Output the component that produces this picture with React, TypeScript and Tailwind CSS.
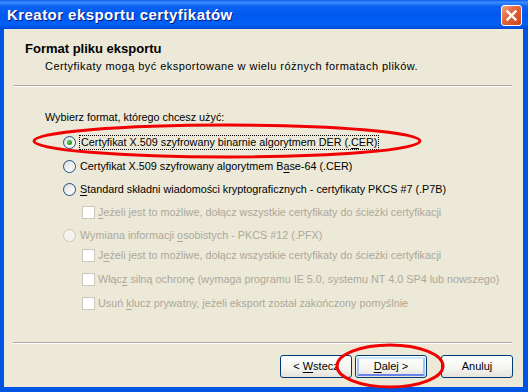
import type { ReactNode } from "react";

const FONT = "font-['Tahoma','Liberation_Sans',sans-serif]";

function Radio({ checked = false, disabled = false }: { checked?: boolean; disabled?: boolean }) {
  return (
    <span
      className={
        disabled
          ? "flex h-[13px] w-[13px] shrink-0 items-center justify-center rounded-full border border-[#CAC8BB] bg-[#F4F3EE]"
          : "flex h-[13px] w-[13px] shrink-0 items-center justify-center rounded-full border border-[#1C5180] bg-[linear-gradient(135deg,#DCDCD7_0%,#F5F5F2_60%,#FFFFFF_100%)]"
      }
    >
      {checked && (
        <span className="h-[5px] w-[5px] rounded-full bg-[radial-gradient(circle_at_35%_35%,#55D451_0%,#21A121_60%,#1A8A1A_100%)]" />
      )}
    </span>
  );
}

function Check() {
  return <span className="h-[13px] w-[13px] shrink-0 border border-[#CAC8BB] bg-white" />;
}

function Row({ children, mt, indent }: { children: ReactNode; mt: string; indent: string }) {
  return <div className={`flex h-[16px] items-center ${mt} ${indent}`}>{children}</div>;
}

function XpButton({ children, focused = false }: { children: ReactNode; focused?: boolean }) {
  return (
    <div className="h-[23px] w-[72px] rounded-[3px] border border-[#003C74] bg-[linear-gradient(to_bottom,#FFFFFF_0%,#F4F4F0_60%,#E3E2DA_100%)] p-px">
      <div
        className={
          focused
            ? "flex h-full w-full items-center justify-center rounded-[2px] border-2 border-t-[#CEE7FF] border-b-[#6982EE] border-l-[#A4C3F7] border-r-[#A4C3F7]"
            : "flex h-full w-full items-center justify-center"
        }
      >
        <span className="text-[11px] text-black">{children}</span>
      </div>
    </div>
  );
}

export default function App() {
  return (
    <div className={`relative flex h-[392px] w-[528px] flex-col overflow-hidden bg-[#0054E3] text-[10.8px] leading-[13px] text-black ${FONT}`}>
      {/* pasek tytulu */}
      <div className="relative flex h-[29px] shrink-0 items-center bg-[linear-gradient(to_bottom,#0A5FEF_0%,#3B8CFF_8%,#0A62F4_22%,#0058EE_50%,#0060F6_85%,#0047D6_100%)] pl-[7px]">
        <span className="text-[15px] font-bold tracking-[0.45px] text-white [text-shadow:1px_1px_0_#0A1883]">
          Kreator eksportu certyfikatów
        </span>
        <div className="absolute right-[6px] top-[5px] flex h-[21px] w-[21px] items-center justify-center rounded-[3px] border border-white bg-[linear-gradient(135deg,#F0A28A_0%,#E4683F_40%,#C9431C_100%)]">
          <svg width="13" height="13" viewBox="0 0 13 13">
            <path d="M2.5 2.5 L10.5 10.5 M10.5 2.5 L2.5 10.5" stroke="white" strokeWidth="2.4" strokeLinecap="square" />
          </svg>
        </div>
      </div>

      <div className="mb-[5px] ml-[4px] mr-[5px] flex flex-1 flex-col bg-[#ECE9D8]">
        {/* naglowek */}
        <div className="pl-[21px] pt-[13px]">
          <div className="text-[13px] font-bold">Format pliku eksportu</div>
          <div className="ml-[20px] mt-[5px] text-[11px] tracking-[0.45px]">
            Certyfikaty mogą być eksportowane w wielu różnych formatach plików.
          </div>
        </div>
        <div className="ml-[10px] mr-[11px] mt-[12px] h-[2px] border-b border-t border-b-white border-t-[#ACA899]" />

        {/* tresc */}
        <div className="ml-[41px] mt-[24px]">Wybierz format, którego chcesz użyć:</div>

        <Row mt="mt-[10px]" indent="pl-[59px]">
          <Radio checked />
          <span className="ml-[3px] border border-dotted border-black px-px">
            Certyfikat X.509 szyfrowany binarnie algorytmem DER (.<u className="underline-offset-2">C</u>ER)
          </span>
        </Row>
        <Row mt="mt-[8px]" indent="pl-[59px]">
          <Radio />
          <span className="ml-[4px]">
            Certyfikat X.509 szyfrowany algorytmem B<u className="underline-offset-2">a</u>se-64 (.CER)
          </span>
        </Row>
        <Row mt="mt-[7px]" indent="pl-[59px]">
          <Radio />
          <span className="ml-[4px]">
            <u className="underline-offset-2">S</u>tandard składni wiadomości kryptograficznych - certyfikaty PKCS #7 (.P7B)
          </span>
        </Row>
        <Row mt="mt-[7px]" indent="pl-[78px]">
          <Check />
          <span className="ml-[3px] text-[#ACA899]">
            <u className="underline-offset-2">J</u>eżeli jest to możliwe, dołącz wszystkie certyfikaty do ścieżki certyfikacji
          </span>
        </Row>
        <Row mt="mt-[7px]" indent="pl-[59px]">
          <Radio disabled />
          <span className="ml-[4px] text-[#ACA899]">
            Wymiana informacji <u className="underline-offset-2">o</u>sobistych - PKCS #12 (.PFX)
          </span>
        </Row>
        <Row mt="mt-[4px]" indent="pl-[78px]">
          <Check />
          <span className="ml-[3px] text-[#ACA899]">
            J<u className="underline-offset-2">e</u>żeli jest to możliwe, dołącz wszystkie certyfikaty do ścieżki certyfikacji
          </span>
        </Row>
        <Row mt="mt-[8px]" indent="pl-[78px]">
          <Check />
          <span className="ml-[3px] text-[#ACA899]">
            Włąc<u className="underline-offset-2">z</u> silną ochronę (wymaga programu IE 5.0, systemu NT 4.0 SP4 lub nowszego)
          </span>
        </Row>
        <Row mt="mt-[8px]" indent="pl-[78px]">
          <Check />
          <span className="ml-[3px] text-[#ACA899]">
            Usuń <u className="underline-offset-2">k</u>lucz prywatny, jeżeli eksport został zakończony pomyślnie
          </span>
        </Row>

        {/* stopka */}
        <div className="mt-auto pb-[9px]">
          <div className="ml-[9px] mr-[11px] h-[2px] border-b border-t border-b-white border-t-[#ACA899]" />
          <div className="mr-[10px] mt-[11px] flex justify-end">
            <XpButton>
              &lt; <u className="underline-offset-2">W</u>stecz
            </XpButton>
            <div className="ml-[3px]">
              <XpButton focused>
                <u className="underline-offset-2">D</u>alej &gt;
              </XpButton>
            </div>
            <div className="ml-[14px]">
              <XpButton>Anuluj</XpButton>
            </div>
          </div>
        </div>
      </div>

      {/* czerwone zaznaczenia */}
      <svg className="pointer-events-none absolute left-0 top-0" width="528" height="392" viewBox="0 0 528 392">
        <ellipse cx="227" cy="141" rx="193" ry="16" fill="none" stroke="#F00000" strokeWidth="3" />
        <ellipse cx="390" cy="366" rx="53" ry="21" fill="none" stroke="#F00000" strokeWidth="3" />
      </svg>
    </div>
  );
}
